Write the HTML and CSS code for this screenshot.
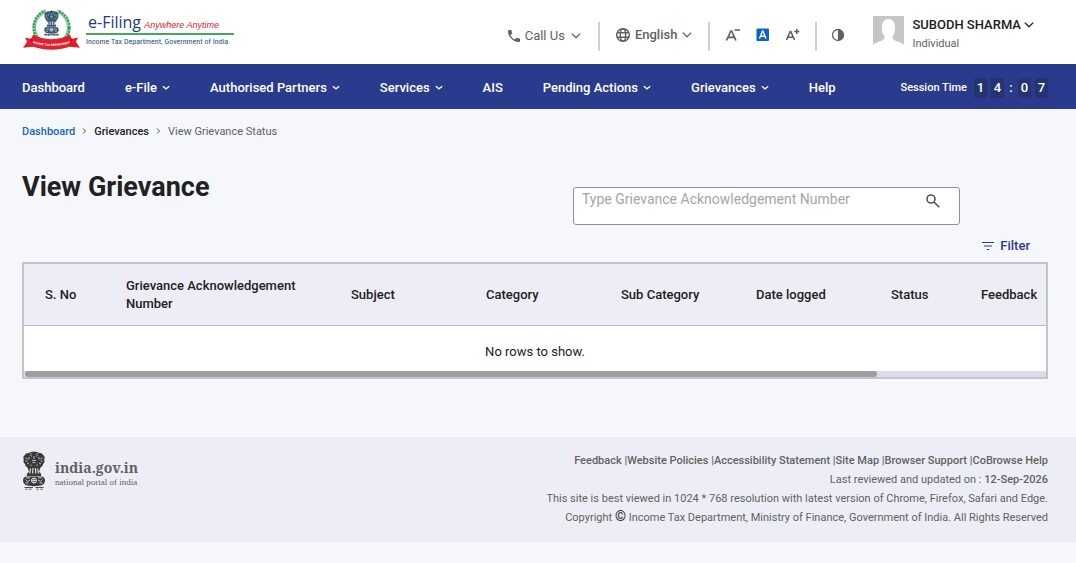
FILE: index.html
```html
<!DOCTYPE html>
<html lang="en">
<head>
    <meta charset="UTF-8">
    <meta name="viewport" content="width=device-width, initial-scale=1.0">
    <title>View Grievance</title>
    <link rel="stylesheet" href="styles.css">
</head>
<body>
    <!-- Shared shapes -->
    <svg class="defs" aria-hidden="true">
        <symbol id="chevron" viewBox="0 0 10 10">
            <path d="M1.500 3 5 6.500 8.500 3" fill="none" stroke="currentColor" stroke-width="1.100"/>
        </symbol>
        <symbol id="chevron-small" viewBox="0 0 8 10">
            <path d="M.8 3.200 4 5.800 7.200 3.200" fill="none" stroke="currentColor" stroke-width="1.300"/>
        </symbol>
        <symbol id="lions" viewBox="0 0 24 40">
            <path d="M7 2c1.500-1.500 3-1 5-1.500 2 .5 3.500 0 5 1.500 2-.3 3.500.5 4 2 1.800.8 2 3 1.200 4.500.8 2 0 3.500-1.200 4.500 0 2-1.500 3-2.500 3.500L17 21c2 1 2.500 2.500 2 4H5c-.5-1.500 0-3 2-4l-1.500-4.500C4.500 16 3 15 3 13 1.800 12 1 10.500 1.800 8.500 1 7 1.200 4.800 3 4c.5-1.500 2-2.300 4-2z" fill="currentColor"/>
            <path d="M3.500 25.500h17c1.800.8 2.500 2.500 2.500 4s-.8 3.500-2.500 4.500c-4 1.500-13 1.500-17 0C1.800 33 1 31 1 29.500s.7-3.200 2.500-4z" fill="currentColor"/>
            <path d="M8.500 4.500l1.500.8M14 5.300l1.500-.8M12 5v3M10 9.500h4M10.500 11.500h3M3.500 7l2 .8M18.500 7.800l2-.8M3.500 10h2M18.500 10h2M5 13l2-1M17 12l2 1M8 2.800h1.500M14.500 2.800H16M7 6v2.500M17 6v2.500M8.500 13.500l1 1.500M15.500 13.500l-1 1.500" fill="none" stroke="#c9cad0" stroke-width=".9"/>
            <path d="M8.500 17.500l-.7 5M11 17l-.4 5.500M13.400 17l.4 5.500M15.700 17.500l.7 5" fill="none" stroke="#edeef5" stroke-width="1.100"/>
            <circle cx="12" cy="29.500" r="2.500" fill="none" stroke="#edeef5" stroke-width="1"/>
            <path d="M12 27v5M9.500 29.500h5M3.500 28.500l2 2 2.500-1.500M20.500 28.500l-2 2-2.500-1.500M3.500 32h3M17.500 32h3M4 26.800h4M16 26.800h4" fill="none" stroke="#d6d7de" stroke-width=".9"/>
            <path d="M2.500 36.500H11M13.500 36.500h8M3.500 38.200h2M7 38.200h2.500M14.500 38.200h2M18.500 38.200h2" stroke="currentColor" stroke-width=".9"/>
        </symbol>
    </svg>

    <header class="top">
        <a class="brand" href="#">
            <svg class="seal" viewBox="0 0 58 42" role="img" aria-label="Income Tax Department seal">
                <circle cx="29" cy="19" r="17.500" fill="none" stroke="#2f9e56" stroke-width="2.600" stroke-dasharray="2.400 .6" pathLength="110"/>
                <circle cx="29" cy="19" r="15.800" fill="none" stroke="#7cc293" stroke-width="1.200"/>
                <path d="M23 0h12v4H23z" fill="#fff"/>
                <svg x="20.500" y="2" width="17" height="26" viewBox="0 0 24 40" color="#37556f"><use href="#lions"/></svg>
                <path d="M22 26h14" stroke="#555" stroke-width="1.800" stroke-dasharray="2 1"/>
                <path d="M1 39l4-6-2-4 6 1 2-4c10 6 26 6 36 0l2 4 6-1-2 4 4 6-10-1c-12 4-24 4-36 0z" fill="#e0202c"/>
                <path d="M11 36l-2-6M47 36l2-6" stroke="#a80f1b" stroke-width="1"/>
                <path id="ribbon" d="M5 32c14 7 34 7 48 0" fill="none"/>
                <text class="ribbon-text"><textPath href="#ribbon" startOffset="50%">INCOME TAX DEPARTMENT</textPath></text>
            </svg>
            <span class="brand-text">
                <span class="brand-line"><span class="brand-name">e-Filing</span> <em>Anywhere Anytime</em></span>
                <span class="brand-dept">Income Tax Department, Government of India</span>
            </span>
        </a>

        <div class="tools">
            <button class="tool call" type="button">
                <svg class="icon-16" viewBox="0 0 24 24"><path d="M6.620 10.790c1.440 2.830 3.760 5.140 6.590 6.590l2.200-2.200c.27-.27.67-.36 1.020-.24 1.120.37 2.330.57 3.570.57.55 0 1 .45 1 1V20c0 .55-.45 1-1 1C10.610 21 3 13.390 3 4c0-.55.45-1 1-1h3.500c.55 0 1 .45 1 1 0 1.250.2 2.450.57 3.570.11.35.03.74-.25 1.020l-2.200 2.200z" fill="currentColor"/></svg>
                Call Us
                <svg class="chev-lg"><use href="#chevron"/></svg>
            </button>
            <button class="tool lang" type="button">
                <svg class="icon-16" viewBox="0 0 24 24" fill="none" stroke="currentColor" stroke-width="2.200"><circle cx="12" cy="12" r="9.500"/><ellipse cx="12" cy="12" rx="4" ry="9.500"/><path d="M3 8.500h18M3 15.500h18"/></svg>
                <span>English</span>
                <svg class="chev-lg"><use href="#chevron"/></svg>
            </button>
            <div class="tool sizes">
                <button type="button" aria-label="Decrease text size"><svg viewBox="0 0 16 16" fill="none" stroke="currentColor" stroke-width="1.700"><path d="M1.500 13.500 5.800 4h.8l4.300 9.500M3.200 10.300h6M9.500 3h5.500"/></svg></button>
                <button type="button" aria-label="Normal text size"><svg viewBox="0 0 16 16"><rect x="1.500" y="1.500" width="12.500" height="12.500" rx="1" fill="#0b63ce"/><path d="M4.500 11.500 7.400 4.200h.6L10.900 11.500M5.600 9.200h4.200" fill="none" stroke="#fff" stroke-width="1.400"/></svg></button>
                <button type="button" aria-label="Increase text size"><svg viewBox="0 0 16 16" fill="none" stroke="currentColor" stroke-width="1.600"><path d="M1.500 13 5.200 4.500h.6L9.500 13M3 10.300h5M11.800 2v5M9.300 4.500h5"/></svg></button>
            </div>
            <button class="tool contrast" type="button" aria-label="Contrast"><svg class="icon-14" viewBox="0 0 14 14"><circle cx="7" cy="7" r="5.500" fill="none" stroke="currentColor" stroke-width="1.300"/><path d="M7 1.500a5.500 5.500 0 0 1 0 11z" fill="currentColor"/></svg></button>
            <div class="user">
                <svg class="avatar" viewBox="0 0 31 31" role="img" aria-label="Profile picture"><path d="M0 0h31v31H0z" fill="#c6c6c6"/><path d="M0 31v-2c2-3 8-3 11-6 .8-1 .5-2.500-.3-4C9 17 9 14 9 11c0-5 2.500-8 6.500-8S22 6 22 11c0 3 0 6-1.700 8-.8 1.500-1.100 3-.3 4 3 3 9 3 11 6v2z" fill="#fff"/></svg>
                <button type="button">
                    <span class="user-name">SUBODH SHARMA <svg class="chev-lg"><use href="#chevron"/></svg></span>
                    <span class="user-role">Individual</span>
                </button>
            </div>
        </div>
    </header>

    <nav class="menu">
        <a href="#">Dashboard</a>
        <a href="#">e-File <svg><use href="#chevron-small"/></svg></a>
        <a href="#">Authorised Partners <svg><use href="#chevron-small"/></svg></a>
        <a href="#">Services <svg><use href="#chevron-small"/></svg></a>
        <a href="#">AIS</a>
        <a href="#">Pending Actions <svg><use href="#chevron-small"/></svg></a>
        <a href="#">Grievances <svg><use href="#chevron-small"/></svg></a>
        <a href="#">Help</a>
        <div class="session">
            <span class="session-label">Session Time</span>
            <b>1</b><b>4</b><i>:</i><b>0</b><b>7</b>
        </div>
    </nav>

    <main>
        <div class="breadcrumb">
            <a href="#">Dashboard</a>
            <svg viewBox="0 0 6 8"><path d="M1.500 1.500 4 4 1.500 6.500" fill="none" stroke="#555" stroke-width="1"/></svg>
            <span class="parent">Grievances</span>
            <svg viewBox="0 0 6 8"><path d="M1.500 1.500 4 4 1.500 6.500" fill="none" stroke="#555" stroke-width="1"/></svg>
            <span>View Grievance Status</span>
        </div>

        <div class="heading">
            <h1>View Grievance</h1>
            <form class="search">
                <input type="text" placeholder="Type Grievance Acknowledgement Number" aria-label="Type Grievance Acknowledgement Number">
                <button type="submit" aria-label="Search"><svg viewBox="0 0 18 18" fill="none" stroke="#555" stroke-width="1.600"><circle cx="7" cy="7" r="4"/><path d="m10 10 5.300 5.300"/></svg></button>
            </form>
        </div>

        <button class="filter" type="button">
            <svg viewBox="0 0 12 10" fill="none" stroke="currentColor" stroke-width="1.200"><path d="M0 1.500h12M2 5h8M4.800 8.500h2.400"/></svg>
            Filter
        </button>

        <div class="grid">
            <table>
                <colgroup>
                    <col class="col-no"><col class="col-ack"><col class="col-std"><col class="col-std"><col class="col-std"><col class="col-std"><col class="col-status"><col>
                </colgroup>
                <thead>
                    <tr>
                        <th>S. No</th>
                        <th>Grievance Acknowledgement Number</th>
                        <th>Subject</th>
                        <th>Category</th>
                        <th>Sub Category</th>
                        <th>Date logged</th>
                        <th>Status</th>
                        <th>Feedback</th>
                    </tr>
                </thead>
                <tbody>
                    <tr><td colspan="8">No rows to show.</td></tr>
                </tbody>
            </table>
            <div class="scroll-track"><div class="scroll-thumb"></div></div>
        </div>
    </main>

    <footer>
        <a class="portal" href="#">
            <svg><use href="#lions"/></svg>
            <span>
                <strong>india.gov.in</strong>
                <small>national portal of india</small>
            </span>
        </a>
        <div class="legal">
            <p class="links"><a href="#">Feedback</a> |<a href="#">Website Policies</a> |<a href="#">Accessibility Statement</a> |<a href="#">Site Map</a> |<a href="#">Browser Support</a> |<a href="#">CoBrowse Help</a></p>
            <p>Last reviewed and updated on : <b>12-Sep-2026</b></p>
            <p>This site is best viewed in 1024 * 768 resolution with latest version of Chrome, Firefox, Safari and Edge.</p>
            <p>Copyright <span class="copy">©</span> Income Tax Department, Ministry of Finance, Government of India. All Rights Reserved</p>
        </div>
    </footer>
</body>
</html>
```

FILE: styles.css
```css
* {
    box-sizing: border-box;
}

body {
    margin: 0;
    background: #f6f7fb;
    color: #212121;
    font-family: Roboto, "Liberation Sans", sans-serif;
    font-size: 13px;
}

a {
    color: inherit;
    text-decoration: none;
}

button {
    border: 0;
    padding: 0;
    background: none;
    color: inherit;
    font: inherit;
    cursor: pointer;
}

svg {
    display: block;
    flex-shrink: 0;
}

.defs {
    display: none;
}

/* Top bar */
.top {
    display: flex;
    justify-content: space-between;
    height: 64px;
    padding: 0 41px 0 22px;
    background: #fff;
}

.brand {
    display: flex;
    align-items: flex-start;
    gap: 5px;
    padding-top: 8px;
}

.seal {
    width: 59px;
    height: 43px;
}

.ribbon-text {
    fill: #fff;
    font-size: 3px;
    font-weight: 700;
    text-anchor: middle;
}

.brand-text {
    display: flex;
    flex-direction: column;
    min-width: 148px;
    padding-top: 4px;
    white-space: nowrap;
}

.brand-line {
    height: 23px;
    padding-left: 2px;
    border-bottom: 2px solid #4aa564;
    line-height: 20px;
}

.brand-name {
    color: #1c3f7c;
    font-family: "Open Sans", sans-serif;
    font-size: 16px;
}

.brand-line em {
    color: #d3232e;
    font-family: "Liberation Sans", Arial, sans-serif;
    font-size: 9px;
}

.brand-dept {
    color: #1c4f86;
    font-family: "Liberation Sans Narrow", "Roboto Condensed", "Liberation Sans", sans-serif;
    font-size: 8px;
    line-height: 13px;
}

.tools {
    display: flex;
    align-items: flex-start;
    padding-top: 16px;
    color: #616161;
}

.tool {
    display: flex;
    align-items: center;
    height: 29px;
    margin-top: 6px;
    border-right: 2px solid #cfcfcf;
}

.icon-16 {
    width: 16px;
    height: 16px;
}

.icon-14 {
    width: 14px;
    height: 14px;
}

.chev-lg {
    width: 12px;
    height: 12px;
}

.call {
    gap: 3px;
    padding: 0 16px 2px 0;
}

.call .chev-lg {
    margin-left: 2px;
}

.lang {
    gap: 4px;
    padding: 0 15px 4px;
    font-weight: 500;
}

.sizes {
    gap: 14px;
    padding: 0 14px 4px 15px;
}

.sizes svg {
    width: 16px;
    height: 16px;
}

.contrast {
    padding: 0 0 4px 14px;
    border: 0;
}

.user {
    display: flex;
    gap: 8px;
    margin-left: 28px;
}

.avatar {
    width: 31px;
    height: 31px;
}

.user button {
    text-align: left;
}

.user-name {
    display: flex;
    align-items: center;
    gap: 2px;
    color: #212121;
    font-weight: 500;
    line-height: 18px;
}

.user-role {
    display: block;
    font-size: 11px;
    line-height: 20px;
}

/* Menu */
.menu {
    display: flex;
    align-items: center;
    gap: 40px;
    height: 45px;
    padding: 2px 28px 0 22px;
    background: #2a3a8d;
    color: #fff;
    font-weight: 500;
    white-space: nowrap;
}

.menu a {
    display: flex;
    align-items: center;
    gap: 5px;
}

.menu svg {
    width: 8px;
    height: 10px;
}

.session {
    display: flex;
    align-items: center;
    gap: 4px;
    margin-left: auto;
}

.session-label {
    margin-right: 3px;
    font-size: 11px;
}

.session b,
.session i {
    width: 13px;
    font-style: normal;
    font-weight: 500;
    line-height: 20px;
    text-align: center;
}

.session b {
    background: #25346f;
}

.session i {
    width: 6px;
}

/* Content */
main {
    padding: 0 28px 58px 22px;
}

.breadcrumb {
    display: flex;
    align-items: center;
    gap: 6px;
    height: 44px;
    color: #616161;
    font-size: 11px;
}

.breadcrumb a {
    color: #1565c0;
}

.breadcrumb svg {
    width: 7px;
    height: 8px;
}

.breadcrumb .parent {
    color: #212121;
}

.breadcrumb a,
.breadcrumb .parent {
    font-weight: 500;
}

.heading {
    display: flex;
    justify-content: space-between;
    padding: 18px 88px 0 0;
}

h1 {
    margin: 0;
    font-size: 27px;
    font-weight: 700;
    line-height: 32px;
}

.search {
    display: flex;
    align-items: flex-start;
    width: 387px;
    height: 38px;
    margin-top: 16px;
    padding: 1px 17px 0 8px;
    border: 1px solid #8f8f94;
    border-radius: 3px;
    background: #fff;
}

.search input {
    flex: 1;
    min-width: 0;
    height: 20px;
    padding: 0;
    border: 0;
    outline: 0;
    background: none;
    color: #212121;
    font: 14px Roboto, "Liberation Sans", sans-serif;
}

.search input::placeholder {
    color: #a6a6a6;
}

.search svg {
    width: 18px;
    height: 24px;
}

.filter {
    display: flex;
    align-items: center;
    gap: 6px;
    margin: 12px 18px 8px auto;
    color: #2a3a8d;
    font-weight: 500;
    line-height: 17px;
}

.filter svg {
    width: 12px;
    height: 10px;
}

.grid {
    border: 2px solid #c3c4d0;
    background: #fff;
}

.grid table {
    width: 100%;
    border-collapse: collapse;
    table-layout: fixed;
}

.grid th {
    height: 61px;
    padding: 2px 0 0 21px;
    border-bottom: 1px solid #babbc8;
    background: #edeef5;
    font-weight: 500;
    line-height: 18px;
    text-align: left;
}

.grid td {
    height: 46px;
    padding: 6px 0 0;
    text-align: center;
}

.col-no {
    width: 81px;
}

.col-ack {
    width: 225px;
}

.col-std {
    width: 135px;
}

.col-status {
    width: 90px;
}

.scroll-track {
    height: 6px;
    padding-left: 1px;
    background: #dadcea;
}

.scroll-thumb {
    width: 83.4%;
    height: 6px;
    border-radius: 3px;
    background: #9e9e9e;
}

/* Footer */
footer {
    display: flex;
    justify-content: space-between;
    padding: 14px 28px 15px 22px;
    background: #edeef5;
    color: #616161;
    font-size: 11px;
    line-height: 19px;
}

.portal {
    display: flex;
    align-items: flex-start;
    gap: 9px;
}

.portal svg {
    width: 24px;
    height: 40px;
    color: #3a3a3a;
}

.portal span {
    padding-top: 8px;
}

.portal strong,
.portal small {
    display: block;
}

.portal strong {
    font-family: "Noto Serif", "DejaVu Serif", serif;
    font-size: 14px;
    line-height: 18px;
}

.portal small {
    font-family: "Liberation Serif", serif;
    font-size: 9px;
    line-height: 10px;
}

.legal {
    text-align: right;
}

.legal p {
    height: 19px;
    margin: 0;
}

.legal b,
.links {
    font-weight: 500;
}

.copy {
    color: #212121;
    font-size: 14px;
    line-height: 1;
}
```
